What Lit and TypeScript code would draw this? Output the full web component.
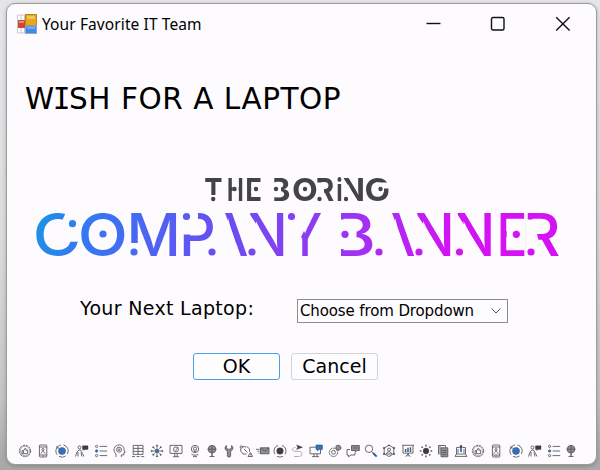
import { LitElement, html, css, svg } from "lit";
import { customElement } from "lit/decorators.js";

type Slot = [letter: string, left: number, right: number];

const pen = document.createElement("canvas").getContext("2d")!;

/* Stretches each letter so that its ink fills the given slot. */
const fitted = (slots: Slot[], weight: number, size: number) =>
  slots.map(([ch, left, right]) => {
    pen.font = `${weight} ${size}px Inter`;
    const m = pen.measureText(ch);
    const lsb = -m.actualBoundingBoxLeft;
    const ink = m.actualBoundingBoxRight - lsb;
    const k = ch === " " ? (right - left) / m.width : (right - left) / ink;
    return svg`<tspan x=${(left - (ch === " " ? 0 : lsb * k)).toFixed(2)} textLength=${(m.width * k).toFixed(2)} lengthAdjust="spacingAndGlyphs">${ch}</tspan>`;
  });

const SMALL: Slot[] = [
  ["T", 205, 221.5], ["H", 228.5, 242.7], ["E", 247, 261], [" ", 263, 270],
  ["B", 271, 289.5], ["O", 293.2, 316.6], ["R", 317.4, 334.5], ["i", 337, 341.5],
  ["N", 343.5, 363], ["G", 365.5, 389.3],
];
const LARGE: Slot[] = [
  ["C", 36, 78], ["O", 81, 125], ["M", 130.5, 176.5], ["P", 183, 213.5],
  ["A", 209, 247.5], ["N", 249.5, 284], ["Y", 288.5, 321], [" ", 322, 333],
  ["B", 335, 373.5], ["A", 376, 414.5], ["N", 416.5, 451], ["N", 457, 491.5],
  ["E", 500, 525], ["R", 525, 559],
];

@customElement("company-banner")
export class CompanyBanner extends LitElement {
  static styles = css`
    :host { display: block; height: 92px; }
    .art { display: block; width: 540px; height: 92px; overflow: visible; }
    .small { font: 700 31.5px Inter, sans-serif; fill: #444348; }
    .large { font: 500 59.5px Inter, sans-serif; }
  `;
  render() {
    return html`<svg class="art" viewBox="30 172 540 92">
      <defs>
        <linearGradient id="hue" gradientUnits="userSpaceOnUse" x1="36" y1="205" x2="470" y2="330">
          <stop offset="0" stop-color="#1b93e6" />
          <stop offset=".13" stop-color="#3677f2" />
          <stop offset=".42" stop-color="#6a4df2" />
          <stop offset=".68" stop-color="#9b35f2" />
          <stop offset=".9" stop-color="#d214f4" />
          <stop offset="1" stop-color="#d512f4" />
        </linearGradient>
        <mask id="cutSmall" maskUnits="userSpaceOnUse" x="30" y="172" width="540" height="92">
          <rect x="30" y="172" width="540" height="92" fill="#fff" />
          <path d="M209 195h8v8h-8zM232.700 184h6v10h-6zM251.200 185h12v8h-12zM270 176h4.300v28h-4.300zM273 182.300h8v15h-8z
            M317 182.500h5v22h-5zM317 187h7v17h-7zM342 178l1.500 0 15.500 25h-17z
            M376 182.500h8v9.700h-8zM381 182.500h9v4h-9z" fill="#000" />
        </mask>
        <mask id="cutLarge" maskUnits="userSpaceOnUse" x="30" y="172" width="540" height="92">
          <rect x="30" y="172" width="540" height="92" fill="#fff" />
          <path d="M67 210h12v31H64.500v-16l-2-5zM129 243h9v15h-9zM182 211h16v23.500h-16z
            M214.500 211H224.300L241.500 258H205V240H214.500zM248 211l1 2 27.700 43v2h-28.700z
            M285 211H312L305 229 301 237H285z
            M334 211h7v47h-7zM340 219.500h16.500v29.500h-16.500z
            M375 211H391.300L408.500 258H375zM415 211l1 2 27.700 43v2h-28.700zM455.500 211l1 2 27.700 43v2h-28.700z
            M506.700 219.500h17.800v29.500h-17.800zM525.200 211h2.500v47h-2.500zM527 219.500h7v38.500h-7zM527 219.500h11v11.500h-4v3h3l6 24h-16z" fill="#000" />
        </mask>
      </defs>
      <g class="small">
        <text y="201" mask="url(#cutSmall)">${fitted(SMALL, 700, 31.5)}</text>
        ${[[213.2, 199], [234.5, 189], [256, 189], [276, 189], [305, 189], [319.5, 199], [346, 199], [380.5, 189]].map(
          ([x, y]) => svg`<circle cx=${x} cy=${y} r="2.2" />`)}
      </g>
      <g class="large" fill="url(#hue)">
        <text y="256" mask="url(#cutLarge)">${fitted(LARGE, 500, 59.5)}</text>
        ${[[72.5, 223.7], [103, 234], [134, 252], [186.5, 216.5], [212, 252], [252, 252], [291.5, 216.5], [345, 234.3], [379, 252], [419, 252], [459.5, 252], [516.3, 234.3], [531, 252]].map(
          ([x, y]) => svg`<circle cx=${x} cy=${y} r="3.6" />`)}
      </g>
    </svg>`;
  }
}

const thumb = svg`<circle cx="7" cy="7" r="5.7" stroke-dasharray="2.2 .8"/><circle cx="7" cy="7" r="4.8" stroke-width=".5"/><path d="M4 6.7h1.4v3H4zM5.4 7l1.7-2.8c1 0 1 .9.6 2h2.2l-.5 3.5H5.4"/>`;
const phone = svg`<rect x="3.4" y="1" width="7.4" height="12" rx=".8"/><path d="M3.4 3h7.4M3.4 11h7.4" /><circle cx="7" cy="5.6" r="1.1"/><path d="M5 9.6c.3-2.6 3.8-2.6 4 0M6.3 12h1.5"/>`;
const sync = svg`<circle class="blue" cx="7" cy="7" r="3.5"/><path d="M2.2 10.8A6.1 6.1 0 0 1 6 1M8.5 1A6.1 6.1 0 0 1 12.4 10M10.6 12A6.1 6.1 0 0 1 4 12.4M1 3l2 0 0 2"/><path d="M5 6l2 2 2-2" stroke-width=".6"/>`;
const speaker = svg`<circle cx="4.500" cy="3.400" r="1.500"/><path d="M.5 12.500l1.500-4.500 2-2h1.500l2 3.500L9 12.500M3 8v4.500M6 8.500l1 4"/><path class="dark" d="M7.500 1.800h5.500v3.600H10L8.800 6.600V5.400H7.500z"/>`;
const list = svg`<circle cx="2.6" cy="2.4" r="1.1"/><circle class="blue" cx="2.6" cy="7" r="1.2"/><circle cx="2.6" cy="11.6" r="1.1"/><path d="M5.6 2.4h7.6M5.6 7h7.6M5.6 11.6h7.6"/>`;
const head = svg`<path d="M4 13v-3C.4 7 1.7 1 7.2 1c4 0 5.2 3 4.7 5l1.2 2.2-1.2.5v2.2H9.3V13"/><circle cx="7" cy="5.7" r="2.5"/><circle cx="7" cy="5.7" r=".9"/>`;
const table = svg`<path d="M2.2 1.4h9.8v9H2.2zM7 1.4v9M2.2 4.4H12M2.2 7.4H12M1 12.6h3M5.6 12.6h3M10.2 12.6h3"/>`;
const hub = svg`<path d="M7 3v8M3 7h8M4.2 4.2l5.6 5.6M9.8 4.2L4.2 9.8" stroke-width=".7"/><circle class="blue" cx="7" cy="7" r="1.8"/><g class="dark"><circle cx="7" cy="1.8" r=".8"/><circle cx="7" cy="12.2" r=".8"/><circle cx="1.8" cy="7" r=".8"/><circle cx="12.2" cy="7" r=".8"/><circle cx="3.3" cy="3.3" r=".7"/><circle cx="10.7" cy="3.3" r=".7"/><circle cx="3.3" cy="10.7" r=".7"/><circle cx="10.7" cy="10.7" r=".7"/></g>`;
const monitor = svg`<path d="M1 1.4h12v8H1zM4 12.7h6M5.8 9.4v3.2M8.2 9.4v3.2"/><circle cx="7" cy="5.4" r="2.5"/><path d="M6 5.6l.8.8 2.2-3" stroke-width=".8"/>`;
const bulb = svg`<circle cx="7" cy="5" r="3.700"/><circle cx="7" cy="4.6" r="1.6"/><path d="M3.500 10.300c1.500 1.200 5.500 1.200 7 0M5 12.600h4M5.600 6.400L7 8l1.500-1.600"/>`;
const globe = svg`<circle class="mid" cx="7" cy="5.200" r="3.800"/><path d="M2.4 5.2h9.2M7 1v11.4M4.500 12.500h5M7 9.2v3"/>`;
const wrench = svg`<path class="mid" d="M4.400 1.500v2.800L7 5.500l2.600-1.200V1.500c2 1.500 1.700 4.500-1 5.700V12c0 1.400-3.200 1.400-3.200 0V7.200C2.700 6 2.400 3 4.400 1.500z"/>`;
const touch = svg`<path d="M3 2.800h4.500M1.700 4.500v2.500l2.300 3h3.500M8 2.800l2.500 2v3M5 5l3.500 3.500M9 12.500l2.500-4 2 4zM11.500 10.300v1" /><circle cx="2.300" cy="3" r="1.200"/>`;
const mail = svg`<path class="mid" d="M4.500 3.800H13v6H4.500z"/><path d="M4.500 3.800L9 7.200l4-3.400M0 5.300h3.500M1.500 7.200h2M2.500 9.200h1"/>`;
const orbit = svg`<circle class="dark" cx="7" cy="7" r="3.300"/><path d="M5 1.300A6 6 0 0 0 2 10.300M9 1.300A6 6 0 0 1 12 10.300M4 12.300a6 6 0 0 0 6 0"/>`;
const route = svg`<path class="dark" d="M5.500 1l6 2.200-6 2.200 1.300-2.200z"/><path d="M4.500 3.500H3.500c-4 1.500-2.500 3.800 1.500 3.800h2.500c5 0 4.500 5.200 0 5.200H3" stroke="#a6a6a8"/>`;
const computer = svg`<path d="M1 3.200h10.500v6.600H1zM3 12.600h7M5 9.800v2.600M8 9.800v2.600"/><path class="blue" d="M7 1h6.400v4.500H10L8.500 7V5.500H7z"/>`;
const gears = svg`<circle cx="5.500" cy="8.300" r="4.200" stroke-dasharray="2.600 .5"/><circle cx="5.500" cy="8.300" r="1.900"/><circle class="mid" cx="10.300" cy="3.700" r="2.400" stroke-dasharray="1 .4" stroke-width="1.300"/>`;
const chats = svg`<path class="mid" d="M5.500 1.500h7.800v5H11L9.300 8V6.500H5.500z"/><path d="M4 5.500H1V11h1.500v1.800L5 11h4V8.500M7 4h5"/>`;
const lens = svg`<circle cx="5" cy="4.800" r="3.700"/><path d="M7.700 7.500l1.500 1.500"/><path d="M9 9l3.700 3.600" stroke="#245fae" stroke-width="2"/>`;
const crew = svg`<path d="M7 1.200l4.800 2.800v5.600L7 12.600 2.200 9.600V4z"/><circle cx="7" cy="5.600" r="1.500"/><path d="M4.300 10c.5-3 4.800-3 5.400 0z"/><g class="dark"><circle cx="7" cy="1.300" r=".6"/><circle cx="2" cy="4" r=".8"/><circle cx="12" cy="4" r=".8"/><circle cx="2" cy="10" r=".8"/><circle cx="12" cy="10" r=".8"/></g>`;
const board = svg`<path d="M1 1.300h12M2 1.300v7.800h10V1.300M7 9v3.600M4.600 12.700L7 10l2.400 2.700"/><path d="M4.600 5v3M9.500 3.200V8" stroke-width="1.500"/><path d="M7 3.800V8" stroke="#245fae" stroke-width="1.500"/>`;
const sun = svg`<circle class="dark" cx="7" cy="7" r="2.900"/><path d="M7 .8v1.600M7 11.600v1.600M.8 7h1.600M11.600 7h1.600M2.600 2.600l1.100 1.100M10.300 10.300l1.100 1.100M11.400 2.600l-1.100 1.100M3.700 10.300l-1.100 1.100" stroke-width="1.500"/>`;
const copy = svg`<path d="M2.500 10.500v-9h7v2"/><path class="mid" d="M5 3.800h6.800v9H5z"/><path d="M6.500 6.500h4M6.500 8.500h4M6.500 10.500h4M4 1.500v9"/>`;
const laptop = svg`<path d="M2.500 10V3.500H5M9 3.500h2.500V10M1 12.400h12L11.500 10h-9zM4 5v4M10 5v4"/><path d="M7 2v6" stroke="#245fae" stroke-width="1.600"/><path class="dark" d="M5.300 3.400L7 .8l1.700 2.600z"/>`;

/* Each badge with the horizontal centre it is drawn around. */
const BADGES: [unknown, number][] = [
  [thumb, 25], [phone, 43.3], [sync, 62.5], [speaker, 82], [list, 101], [head, 118.8], [table, 138],
  [hub, 157.3], [monitor, 176.5], [bulb, 195], [globe, 212], [wrench, 229], [touch, 246.500], [mail, 263],
  [orbit, 280.500], [route, 298.500], [computer, 316], [gears, 335], [chats, 353], [lens, 371], [crew, 389],
  [board, 408.500], [sun, 426], [copy, 443.500], [laptop, 460.700], [thumb, 478.500], [phone, 496.500],
  [sync, 516], [speaker, 535.500], [list, 554.500], [globe, 570.800],
];

@customElement("badge-strip")
export class BadgeStrip extends LitElement {
  static styles = css`
    :host { display: flex; height: 14px; }
    .slot { flex: none; height: 14px; }
    .badge { display: block; width: 14px; height: 14px; fill: none; stroke: #5a5a5c; stroke-width: .9; overflow: visible; }
    .blue { fill: #2f73c2; stroke: #2d5688; stroke-width: .6; }
    .dark { fill: #3c3c3e; stroke: #3c3c3e; stroke-width: .4; }
    .mid { fill: #909094; }
  `;
  render() {
    return BADGES.map(([art, x], i) => {
      const step = (BADGES[i + 1]?.[1] ?? x + 14) - x;
      return html`<div class="slot" style="width:${step}px"><svg class="badge" viewBox="0 0 14 14">${art}</svg></div>`;
    });
  }
}

@customElement("push-button")
export class PushButton extends LitElement {
  static properties = { label: {} };
  declare label: string;
  static styles = css`
    :host { display: block; }
    .face {
      box-sizing: border-box; width: 87px; height: 27px; padding: 0; display: flex; align-items: center; justify-content: center;
      border: 1px solid var(--edge, #d4d2d6); border-radius: 3px; background: #fdfcfe; color: #000;
      font: 19px/25px "DejaVu Sans", sans-serif;
    }
  `;
  render() {
    return html`<button class="face">${this.label}</button>`;
  }
}

@customElement("app-root")
export class AppRoot extends LitElement {
  static styles = css`
    :host {
      display: block; box-sizing: border-box; width: 600px; height: 470px; padding: 3px 3px 5px 6px; overflow: hidden;
      background: linear-gradient(#e6e5e7, #dcdcdd 50%, #c4c4c5 85%, #a9a9a9 98%);
    }
    .window {
      box-sizing: border-box; height: 462px; display: flex; flex-direction: column;
      border: 1px solid #9c9b9e; border-radius: 9px; background: #fdfbfe; color: #000;
      box-shadow: 0 1px 4px rgba(0, 0, 0, .22);
    }
    .bar { display: flex; align-items: center; height: 40px; padding: 0 25px 0 10px; }
    .logo { width: 20px; height: 20px; margin-right: 5px; }
    .title { flex: 1; font: 15.500px/20px "Noto Sans", sans-serif; letter-spacing: .1px; white-space: nowrap; }
    .controls { display: flex; gap: 49px; }
    .control { display: block; width: 16px; height: 16px; fill: none; stroke: #111; stroke-width: 1.400; }
    .heading { margin: 33px 0 0 18px; height: 44px; font: 400 29.500px/44px "DejaVu Sans", sans-serif; letter-spacing: .54px; white-space: nowrap; }
    .serifed { font-family: "DejaVu Sans Mono", monospace; margin: 0 -2px; }
    .banner { margin: 51px 0 0 23px; }
    .field { display: flex; align-items: flex-start; margin: 31px 0 0 73px; height: 28px; }
    .caption { width: 217px; font: 19px/26px "DejaVu Sans", sans-serif; letter-spacing: .32px; white-space: nowrap; }
    .select {
      box-sizing: border-box; width: 211px; height: 24px; margin-top: 4px; padding: 0 6px 0 2px; display: flex; align-items: center;
      justify-content: space-between; border: 1px solid #8d8c90; background: #fdfcfe;
      font: 15px/22px "DejaVu Sans", sans-serif; letter-spacing: -.12px; white-space: nowrap;
    }
    .chevron { width: 10px; height: 6px; fill: none; stroke: #555; stroke-width: 1; }
    .actions { display: flex; gap: 11px; margin: 30px 0 0 186px; }
    .default { --edge: #4a9fe8; }
    .strip { margin: auto 0 6px 11px; }
  `;
  render() {
    return html`<div class="window">
      <header class="bar">
        <svg class="logo" viewBox="0 0 20 20">
          <path d="M.5 1h7v18h-7zM4 1v18" fill="#fff" stroke="#c9c7cb" />
          <rect x="1" y="6" width="7" height="8" fill="#d0443a" /><path d="M2 7h5v2H2z" fill="#e8877b" />
          <rect x="8.500" y=".5" width="11" height="11" fill="#e5a81c" stroke="#b9861c" /><path d="M10 2h8v3h-8z" fill="#f3c652" />
          <rect x="8.500" y="12" width="11" height="7.500" fill="#4388e8" stroke="#88a9dc" /><path d="M10 13h8v2h-8z" fill="#71acf5" />
        </svg>
        <div class="title">Your Favorite IT Team</div>
        <div class="controls">
          <svg class="control" viewBox="0 0 16 16"><path d="M1.500 7.500h14" /></svg>
          <svg class="control" viewBox="0 0 16 16"><rect x="1.500" y="1.500" width="12.500" height="12.500" rx="1.500" /></svg>
          <svg class="control" viewBox="0 0 16 16"><path d="M1.200 1.200l13.400 13.400M14.600 1.200L1.200 14.600" /></svg>
        </div>
      </header>
      <h1 class="heading">W<span class="serifed">I</span>SH FOR A LAPTOP</h1>
      <company-banner class="banner"></company-banner>
      <div class="field">
        <div class="caption">Your Next Laptop:</div>
        <div class="select">Choose from Dropdown
          <svg class="chevron" viewBox="0 0 10 6"><path d="M.5 .5L5 5 9.500 .5" /></svg>
        </div>
      </div>
      <div class="actions">
        <push-button class="default" label="OK"></push-button>
        <push-button label="Cancel"></push-button>
      </div>
      <badge-strip class="strip"></badge-strip>
    </div>`;
  }
}
